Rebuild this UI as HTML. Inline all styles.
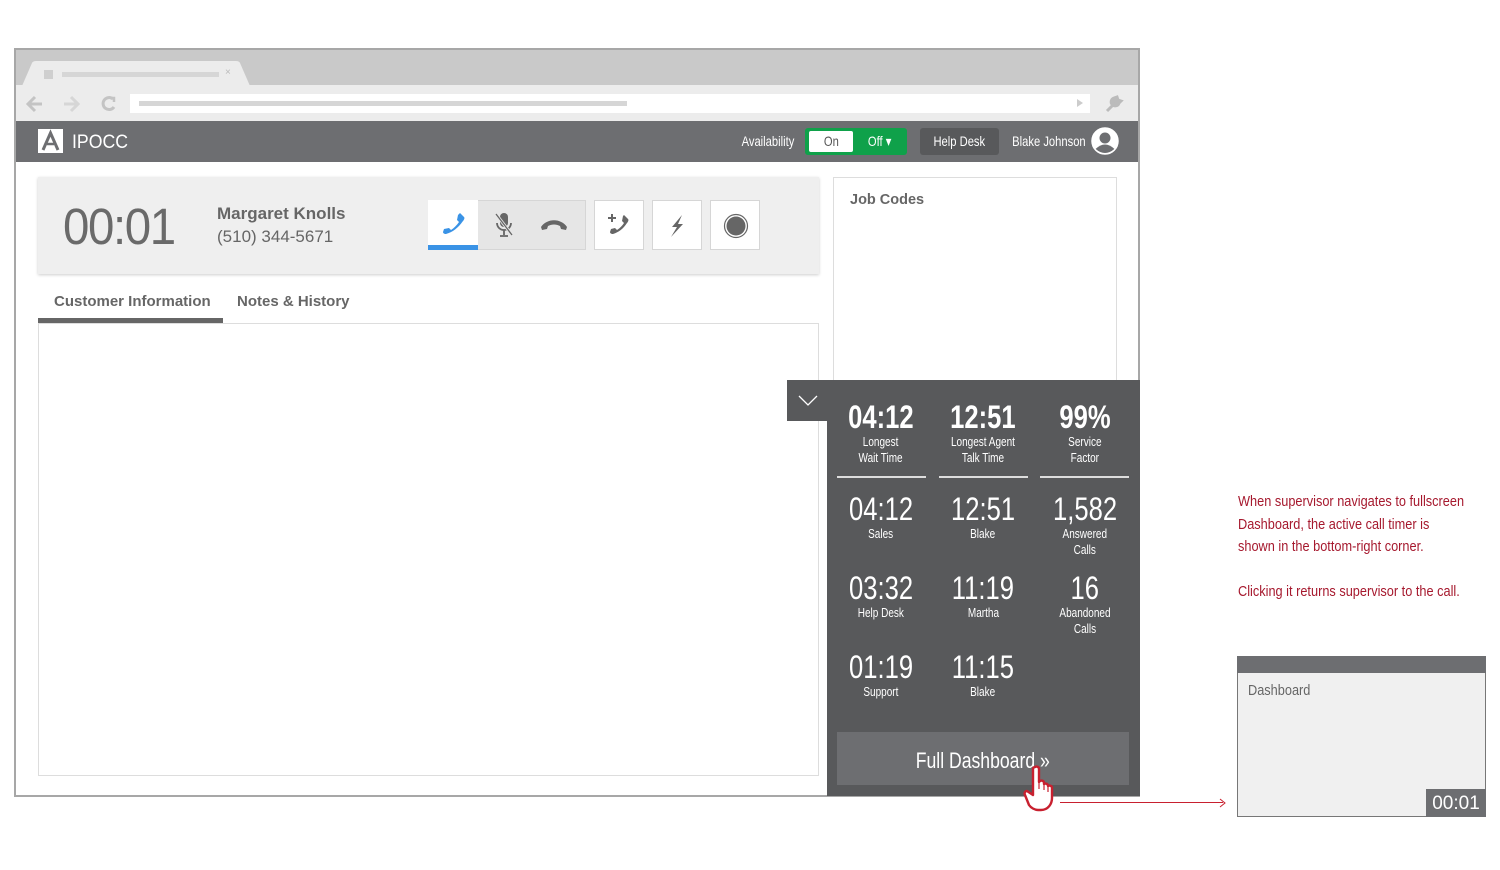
<!DOCTYPE html>
<html><head><meta charset="utf-8">
<style>
*{margin:0;padding:0;box-sizing:border-box}
body{width:1500px;height:870px;background:#fff;position:relative;overflow:hidden;font-family:"Liberation Sans",sans-serif}
.a{position:absolute}
.n{display:inline-block;transform:scaleX(.8);transform-origin:center;white-space:nowrap}
.nl{display:inline-block;transform:scaleX(.85);transform-origin:left center;white-space:nowrap}
.col{position:absolute;width:100px;text-align:center;color:#fff}
.big{font-size:32px;line-height:34px}
.lbl{font-size:12.5px;line-height:16px}
.btn{position:absolute;top:200px;width:50px;height:50px;background:#fff;border:1px solid #d6d6d6}
</style></head><body>
<div class="a" style="left:14px;top:48px;width:1126px;height:749px;border:2px solid #a7a7a7;background:#fff"></div>
<div class="a" style="left:16px;top:50px;width:1122px;height:36px;background:#c9c9c9"></div>
<svg class="a" style="left:22px;top:61px" width="230" height="26"><path d="M0 25 L10 2 Q11 0 14 0 L214 0 Q217 0 218 2 L228 25 Z" fill="#ececec"/></svg>
<div class="a" style="left:44px;top:70px;width:9px;height:9px;background:#cfcfcf"></div>
<div class="a" style="left:62px;top:72px;width:157px;height:5px;background:#d6d6d6"></div>
<div class="a" style="left:225px;top:67px;font-size:10px;color:#bbb">×</div>
<div class="a" style="left:16px;top:85px;width:1122px;height:36px;background:#ececec"></div>
<svg class="a" style="left:26px;top:94px" width="100" height="20"><g stroke="#c4c4c4" stroke-width="3" fill="none"><path d="M2 10H16M9 3L2 10L9 17"/><path d="M38 10H52M45 3L52 10L45 17" stroke="#d6d6d6"/><path d="M87 5A6 6 0 1 0 88 13" /><path d="M84 4H88V8" stroke-width="2.5"/></g></svg>
<div class="a" style="left:130px;top:94px;width:960px;height:19px;background:#fff"></div>
<div class="a" style="left:139px;top:101px;width:488px;height:5px;background:#d6d6d6"></div>
<div class="a" style="left:1077px;top:99px;width:0;height:0;border-left:6px solid #ccc;border-top:4px solid transparent;border-bottom:4px solid transparent"></div>
<svg class="a" style="left:1104px;top:95px" width="20" height="18"><path d="M3 16L11 8M10 3a4 4 0 1 0 5 5l2-2-3-1-1-3z" stroke="#bbb" stroke-width="3" fill="#bbb"/></svg>
<div class="a" style="left:16px;top:121px;width:1122px;height:41px;background:#6d6e71"></div>
<div class="a" style="left:38px;top:129px;width:25px;height:24px;background:#fff"></div>
<svg class="a" style="left:38px;top:129px" width="25" height="24"><path d="M5 21L12.5 4L20 21" stroke="#6d6e71" stroke-width="3" fill="none"/><path d="M9 15H16" stroke="#6d6e71" stroke-width="2.5"/></svg>
<div class="a" style="left:72px;top:132px;font-size:19px;color:#fff"><span class="nl" style="transform:scaleX(.93)">IPOCC</span></div>
<div class="a" style="left:720px;top:133px;width:95px;font-size:14px;color:#fff;text-align:center"><span class="n">Availability</span></div>
<div class="a" style="left:805px;top:128px;width:102px;height:27px;background:#0fa14a;border-radius:3px"></div>
<div class="a" style="left:809px;top:131px;width:44px;height:21px;background:#fff;border-radius:2px;font-size:14px;color:#555;text-align:center;line-height:21px"><span class="n">On</span></div>
<div class="a" style="left:860px;top:131px;width:40px;font-size:14px;color:#fff;line-height:21px;text-align:center"><span class="n">Off ▾</span></div>
<div class="a" style="left:920px;top:128px;width:79px;height:27px;background:#58595b;border-radius:3px;font-size:14px;color:#fff;text-align:center;line-height:27px"><span class="n">Help Desk</span></div>
<div class="a" style="left:1003px;top:133px;width:84px;font-size:14px;color:#fff;text-align:center"><span class="n">Blake Johnson</span></div>
<svg class="a" style="left:1091px;top:127px" width="28" height="28"><circle cx="14" cy="14" r="13" fill="#fff"/><circle cx="14" cy="11" r="5.5" fill="#6d6e71"/><path d="M4.5 22Q14 13 23.5 22Q14 30 4.5 22Z" fill="#6d6e71"/><circle cx="14" cy="14" r="13" fill="none" stroke="#fff" stroke-width="1.5"/></svg>
<div class="a" style="left:38px;top:177px;width:781px;height:97px;background:#efefef;box-shadow:0 1px 3px rgba(0,0,0,.2)"></div>
<div class="a" style="left:63px;top:197px;font-size:51px;color:#6a6a6a;letter-spacing:-1.5px"><span class="nl" style="transform:scaleX(.93)">00:01</span></div>
<div class="a" style="left:217px;top:204px;font-size:17px;font-weight:bold;color:#666">Margaret Knolls</div>
<div class="a" style="left:217px;top:227px;font-size:17px;color:#666">(510) 344-5671</div>
<div class="a" style="left:428px;top:200px;width:158px;height:50px;background:#e6e6e6;border:1px solid #d6d6d6"></div>
<div class="a" style="left:428px;top:200px;width:50px;height:50px;background:#fff;border-bottom:5px solid #3a93e6"></div>
<svg class="a" style="left:440px;top:210px" width="26" height="26"><path d="M20 3l4 4c1 1 0 3-1 4C18 18 13 22 6 24c-2 0-3-1-3-2l1-3 5-1 2 2c3-2 6-5 8-8l-2-2 1-5z" fill="#3a93e6"/></svg>
<svg class="a" style="left:492px;top:211px" width="24" height="28"><rect x="8" y="2" width="8" height="14" rx="4" fill="#666"/><path d="M5 12a7 7 0 0 0 14 0M12 19v5M8 25h8" stroke="#666" stroke-width="1.8" fill="none"/><path d="M4 3L20 24" stroke="#e6e6e6" stroke-width="3"/><path d="M4 3L20 24" stroke="#666" stroke-width="1.3"/></svg>
<svg class="a" style="left:539px;top:216px" width="30" height="16"><path d="M2 11C8 2 22 2 28 11l-1 3-5-1-1-3c-4-2-8-2-12 0l-1 3-5 1z" fill="#666"/></svg>
<div class="btn" style="left:594px"></div><div class="btn" style="left:652px"></div><div class="btn" style="left:710px"></div>
<svg class="a" style="left:606px;top:212px" width="28" height="26"><path d="M2 6h8M6 2v8" stroke="#666" stroke-width="2"/><path d="M18 3l4 4c1 1 0 3-1 4C17 17 13 20 7 22c-2 0-3-1-3-2l1-3 4-1 2 2c3-2 5-4 7-7l-2-2 1-5z" fill="#666"/></svg>
<svg class="a" style="left:667px;top:214px" width="20" height="24"><path d="M15 1L5 13h5L4 23 16 10h-5z" fill="#666"/></svg>
<svg class="a" style="left:723px;top:213px" width="26" height="26"><circle cx="13" cy="13" r="11.5" fill="none" stroke="#666" stroke-width="1.2"/><circle cx="13" cy="13" r="9.5" fill="#666"/></svg>
<div class="a" style="left:54px;top:293px;font-size:15px;font-weight:bold;color:#666">Customer Information</div>
<div class="a" style="left:237px;top:293px;font-size:15px;font-weight:bold;color:#666">Notes &amp; History</div>
<div class="a" style="left:38px;top:323px;width:781px;height:453px;border:1px solid #ddd"></div>
<div class="a" style="left:38px;top:318px;width:185px;height:5px;background:#666"></div>
<div class="a" style="left:833px;top:177px;width:284px;height:240px;border:1px solid #ddd;background:#fff"></div>
<div class="a" style="left:850px;top:192px;font-size:14.5px;font-weight:bold;color:#666">Job Codes</div>
<div class="a" style="left:787px;top:380px;width:45px;height:41px;background:#58595b"></div>
<svg class="a" style="left:797px;top:394px" width="22" height="14"><path d="M2 2l9 9 9-9" stroke="#fff" stroke-width="1.3" fill="none"/></svg>
<div class="a" style="left:827px;top:380px;width:313px;height:416px;background:#58595b"></div>
<div class="col" style="left:831px;top:400px"><div class="big n" style="font-weight:bold">04:12</div><div class="lbl"><span class="n">Longest<br>Wait Time</span></div></div>
<div class="col" style="left:933px;top:400px"><div class="big n" style="font-weight:bold">12:51</div><div class="lbl"><span class="n">Longest Agent<br>Talk Time</span></div></div>
<div class="col" style="left:1035px;top:400px"><div class="big n" style="font-weight:bold">99%</div><div class="lbl"><span class="n">Service<br>Factor</span></div></div>
<div class="a" style="left:837px;top:476px;width:89px;height:1.5px;background:#ddd"></div>
<div class="a" style="left:939px;top:476px;width:89px;height:1.5px;background:#ddd"></div>
<div class="a" style="left:1040px;top:476px;width:89px;height:1.5px;background:#ddd"></div>
<div class="col" style="left:831px;top:492px"><div class="big n">04:12</div><div class="lbl"><span class="n">Sales</span></div></div>
<div class="col" style="left:933px;top:492px"><div class="big n">12:51</div><div class="lbl"><span class="n">Blake</span></div></div>
<div class="col" style="left:1035px;top:492px"><div class="big n">1,582</div><div class="lbl"><span class="n">Answered<br>Calls</span></div></div>
<div class="col" style="left:831px;top:571px"><div class="big n">03:32</div><div class="lbl"><span class="n">Help Desk</span></div></div>
<div class="col" style="left:933px;top:571px"><div class="big n">11:19</div><div class="lbl"><span class="n">Martha</span></div></div>
<div class="col" style="left:1035px;top:571px"><div class="big n">16</div><div class="lbl"><span class="n">Abandoned<br>Calls</span></div></div>
<div class="col" style="left:831px;top:650px"><div class="big n">01:19</div><div class="lbl"><span class="n">Support</span></div></div>
<div class="col" style="left:933px;top:650px"><div class="big n">11:15</div><div class="lbl"><span class="n">Blake</span></div></div>
<div class="a" style="left:837px;top:732px;width:292px;height:53px;background:#6d6e71;color:#fff;font-size:22px;text-align:center;line-height:58px"><span class="n">Full Dashboard »</span></div>
<svg class="a" style="left:1022px;top:764px" width="44" height="54"><path d="M13 3c2-1 4 0 4 2v13l1-1c2-1 4 0 4 2v1c2-1 4 0 4 2 2-1 4 0 4 2v10c0 6-4 12-11 12h-3c-3 0-7-2-9-5L3 31c-1-2 0-4 2-4l6 4V5c0-1 1-2 2-2z" fill="#fff" stroke="#c8202f" stroke-width="2.4" stroke-linejoin="round"/><path d="M17 18v7M22 20v6M26 23v5" stroke="#c8202f" stroke-width="1.2"/></svg>
<div class="a" style="left:1060px;top:802px;width:163px;height:1px;background:#c8202f"></div>
<svg class="a" style="left:1218px;top:798px" width="10" height="10"><path d="M2 1l5 4-5 4" stroke="#c8202f" stroke-width="1" fill="none"/></svg>
<div class="a" style="left:1238px;top:491px;font-size:15px;line-height:22.5px;color:#a6192e"><span class="nl">When supervisor navigates to fullscreen<br>Dashboard, the active call timer is<br>shown in the bottom-right corner.<br><br>Clicking it returns supervisor to the call.</span></div>
<div class="a" style="left:1237px;top:656px;width:249px;height:161px;background:#f0f0f0;border:1px solid #777"></div>
<div class="a" style="left:1237px;top:656px;width:249px;height:17px;background:#6d6e71"></div>
<div class="a" style="left:1248px;top:682px;font-size:15px;color:#666"><span class="nl">Dashboard</span></div>
<div class="a" style="left:1426px;top:789px;width:60px;height:28px;background:#6d6e71;color:#fff;font-size:19px;text-align:center;line-height:29px">00:01</div>
</body></html>
